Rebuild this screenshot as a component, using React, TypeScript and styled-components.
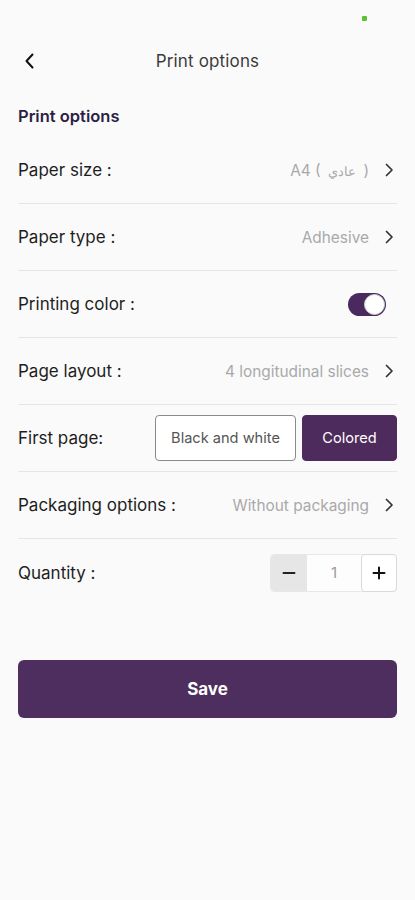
import React from "react";
import styled, { createGlobalStyle } from "styled-components";

const Global = createGlobalStyle`
  html, body { margin: 0; padding: 0; background: #fafafa; }
  body { font-family: Inter, "Noto Sans", sans-serif; }
  * { box-sizing: border-box; }
`;

const Page = styled.div`
  width: 415px;
  min-height: 900px;
  background: #fafafa;
  display: flex;
  flex-direction: column;
`;

const StatusBar = styled.div`
  height: 38px;
  display: flex;
  align-items: flex-start;
  justify-content: flex-end;
  padding: 16px 48px 0 0;
`;

const Dot = styled.span`
  width: 5px;
  height: 5px;
  border-radius: 1px;
  background: #5cc234;
`;

const Header = styled.div`
  height: 46px;
  display: grid;
  grid-template-columns: 48px 1fr 48px;
  align-items: center;
`;

const BackBtn = styled.div`
  display: flex;
  align-items: center;
  justify-content: center;
  padding-left: 12px;
  height: 100%;
`;

const Title = styled.div`
  text-align: center;
  font-size: 17px;
  color: #3a3a3a;
  letter-spacing: 0.15px;
`;

const Content = styled.div`
  padding: 0 18px;
  display: flex;
  flex-direction: column;
`;

const SectionTitle = styled.div`
  font-size: 16.5px;
  line-height: 20px;
  font-weight: 600;
  color: #2b1f45;
  margin: 22px 0 11px;
`;

const Row = styled.div<{ $last?: boolean }>`
  height: 67px;
  display: flex;
  align-items: center;
  justify-content: space-between;
  border-bottom: ${(p) => (p.$last ? "none" : "1px solid #e6e6e6")};
`;

const Label = styled.div`
  font-size: 17px;
  color: #1e1e1e;
`;

const ValueWrap = styled.div`
  display: flex;
  align-items: center;
  gap: 12px;
`;

const Value = styled.span`
  font-size: 15.4px;
  color: #a9a9a9;
  direction: ltr;
`;

const ArabicWord = styled.bdi`
  font-size: 13px;
  padding: 0 3px;
`;

const Chevron = styled.svg`
  width: 16px;
  height: 16px;
`;

const Toggle = styled.div`
  width: 38px;
  height: 23px;
  border-radius: 12px;
  background: #4a2a5e;
  position: relative;
  margin-right: 11px;
`;

const Knob = styled.span`
  position: absolute;
  right: 1px;
  top: 1px;
  width: 21px;
  height: 21px;
  border-radius: 50%;
  background: #fff;
  border: 1px solid #d0d0d0;
`;

const Choices = styled.div`
  display: flex;
  gap: 6px;
`;

const Choice = styled.div<{ $active?: boolean; $w: number }>`
  width: ${(p) => p.$w}px;
  height: 46px;
  border-radius: 4px;
  display: flex;
  align-items: center;
  justify-content: center;
  font-size: 14.6px;
  background: ${(p) => (p.$active ? "#4e2b5d" : "#fff")};
  color: ${(p) => (p.$active ? "#fff" : "#555")};
  border: 1px solid ${(p) => (p.$active ? "#4e2b5d" : "#8a8a8a")};
`;

const Stepper = styled.div`
  display: flex;
  width: 127px;
  height: 38px;
  border: 1px solid #e8e8e8;
  border-radius: 4px;
  background: #fdfdfd;
`;

const StepMinus = styled.div`
  width: 36px;
  background: #e6e6e6;
  display: flex;
  align-items: center;
  justify-content: center;
  border-radius: 3px 0 0 3px;
`;

const StepValue = styled.div`
  flex: 1;
  display: flex;
  align-items: center;
  justify-content: center;
  font-size: 15px;
  color: #9a9a9a;
`;

const StepPlus = styled.div`
  width: 36px;
  margin: -1px -1px -1px 0;
  background: #fff;
  border: 1px solid #d9d9d9;
  border-radius: 4px;
  display: flex;
  align-items: center;
  justify-content: center;
`;

const SaveButton = styled.button`
  margin-top: 54px;
  height: 58px;
  width: 100%;
  border: none;
  border-radius: 6px;
  background: #4d2e5e;
  color: #fff;
  font-family: Inter, sans-serif;
  font-size: 17px;
  font-weight: 700;
`;

const ChevronRight = () => (
  <Chevron viewBox="0 0 16 16">
    <path d="M5.5 2.5 L11 8 L5.5 13.5" fill="none" stroke="#333" strokeWidth="1.7" strokeLinecap="round" strokeLinejoin="round" />
  </Chevron>
);

const NavRow = ({ label, value }: { label: string; value: React.ReactNode }) => (
  <Row>
    <Label>{label}</Label>
    <ValueWrap>
      <Value>{value}</Value>
      <ChevronRight />
    </ValueWrap>
  </Row>
);

export default function App() {
  return (
    <Page>
      <Global />
      <StatusBar>
        <Dot />
      </StatusBar>
      <Header>
        <BackBtn>
          <svg width="16" height="18" viewBox="0 0 16 18">
            <path d="M10.5 2.5 L4.5 9 L10.5 15.5" fill="none" stroke="#111" strokeWidth="2" strokeLinecap="round" strokeLinejoin="round" />
          </svg>
        </BackBtn>
        <Title>Print options</Title>
        <div />
      </Header>
      <Content>
        <SectionTitle>Print options</SectionTitle>
        <NavRow
          label="Paper size :"
          value={
            <>
              A4 ( <ArabicWord>عادي</ArabicWord> )
            </>
          }
        />
        <NavRow label="Paper type :" value="Adhesive" />
        <Row>
          <Label>Printing color :</Label>
          <Toggle>
            <Knob />
          </Toggle>
        </Row>
        <NavRow label="Page layout :" value="4 longitudinal slices" />
        <Row>
          <Label>First page:</Label>
          <Choices>
            <Choice $w={141}>Black and white</Choice>
            <Choice $w={95} $active>
              Colored
            </Choice>
          </Choices>
        </Row>
        <NavRow label="Packaging options :" value="Without packaging" />
        <Row $last>
          <Label>Quantity :</Label>
          <Stepper>
            <StepMinus>
              <svg width="14" height="14" viewBox="0 0 14 14">
                <path d="M1.5 7 H12.5" stroke="#222" strokeWidth="2" strokeLinecap="round" />
              </svg>
            </StepMinus>
            <StepValue>1</StepValue>
            <StepPlus>
              <svg width="14" height="14" viewBox="0 0 14 14">
                <path d="M1.5 7 H12.5 M7 1.5 V12.5" stroke="#111" strokeWidth="2" strokeLinecap="round" />
              </svg>
            </StepPlus>
          </Stepper>
        </Row>
        <SaveButton>Save</SaveButton>
      </Content>
    </Page>
  );
}
